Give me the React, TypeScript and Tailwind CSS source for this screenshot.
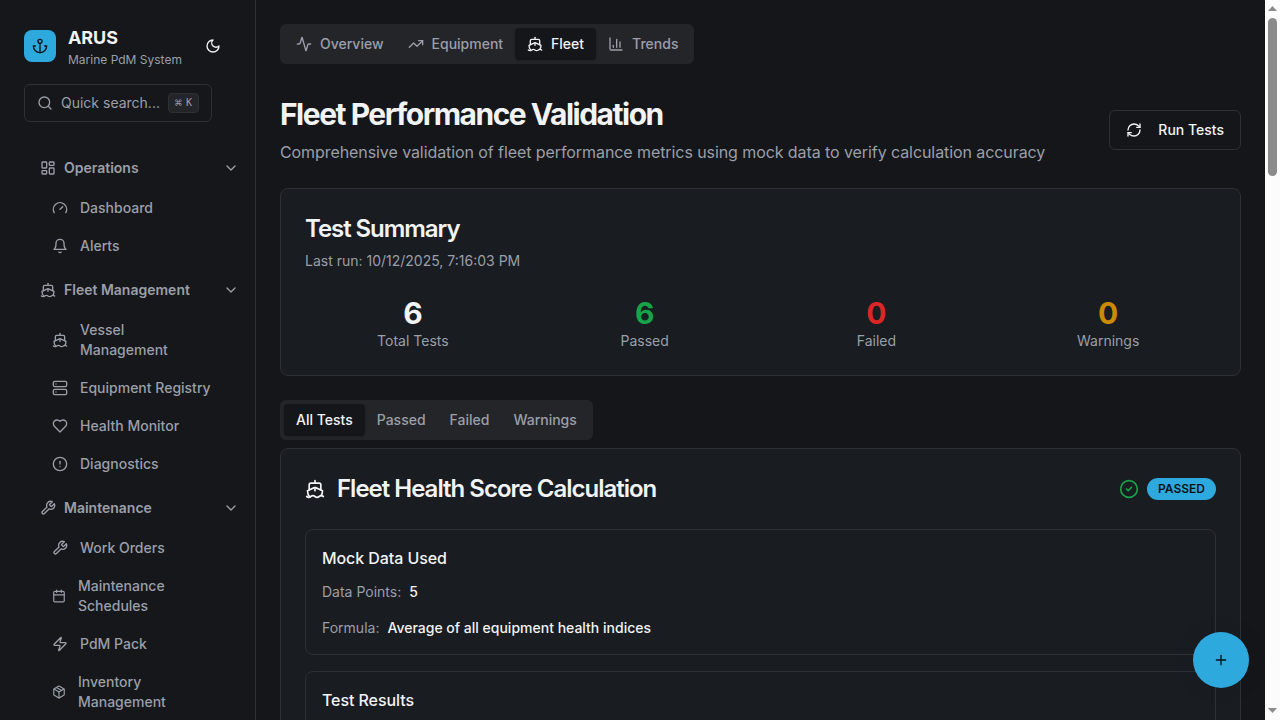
import React from 'react';
import {
  Activity, TrendingUp, Ship, ChartColumn, RefreshCw, Search, LayoutDashboard, Gauge,
  Server, CircleAlert, Calendar, Zap, ChevronDown, CircleCheck, Plus,
} from 'lucide-react';

type IconProps = { className?: string };
type IconType = React.ComponentType<IconProps>;

function Stroke({ className, children }: { className?: string; children: React.ReactNode }) {
  return (
    <svg viewBox="0 0 24 24" fill="none" stroke="currentColor" strokeWidth="2" strokeLinecap="round" strokeLinejoin="round" className={className}>
      {children}
    </svg>
  );
}

const Anchor = ({ className }: IconProps) => (
  <Stroke className={className}>
    <path d="M12 22V8" /><path d="M5 12H2a10 10 0 0 0 20 0h-3" /><circle cx="12" cy="5" r="3" />
  </Stroke>
);
const Moon = ({ className }: IconProps) => (
  <Stroke className={className}><path d="M12 3a6 6 0 0 0 9 9 9 9 0 1 1-9-9Z" /></Stroke>
);
const Bell = ({ className }: IconProps) => (
  <Stroke className={className}>
    <path d="M6 8a6 6 0 0 1 12 0c0 7 3 9 3 9H3s3-2 3-9" /><path d="M10.3 21a1.94 1.94 0 0 0 3.4 0" />
  </Stroke>
);
const Heart = ({ className }: IconProps) => (
  <Stroke className={className}>
    <path d="M19 14c1.49-1.46 3-3.21 3-5.5A5.5 5.5 0 0 0 16.5 3c-1.76 0-3 .5-4.5 2-1.5-1.5-2.74-2-4.5-2A5.5 5.5 0 0 0 2 8.5c0 2.3 1.5 4.05 3 5.5l7 7Z" />
  </Stroke>
);
const Wrench = ({ className }: IconProps) => (
  <Stroke className={className}>
    <path d="M14.7 6.3a1 1 0 0 0 0 1.4l1.6 1.6a1 1 0 0 0 1.4 0l3.77-3.77a6 6 0 0 1-7.94 7.94l-6.91 6.91a2.12 2.12 0 0 1-3-3l6.91-6.91a6 6 0 0 1 7.94-7.94l-3.76 3.76z" />
  </Stroke>
);
const Package = ({ className }: IconProps) => (
  <Stroke className={className}>
    <path d="m7.5 4.27 9 5.15" />
    <path d="M21 8a2 2 0 0 0-1-1.73l-7-4a2 2 0 0 0-2 0l-7 4A2 2 0 0 0 3 8v8a2 2 0 0 0 1 1.73l7 4a2 2 0 0 0 2 0l7-4A2 2 0 0 0 21 16Z" />
    <path d="m3.3 7 8.7 5 8.7-5" /><path d="M12 22V12" />
  </Stroke>
);

type Item = { label: string; icon: IconType; second?: string; narrow?: boolean };
const groups: { label: string; icon: IconType; items: Item[] }[] = [
  { label: 'Operations', icon: LayoutDashboard, items: [{ label: 'Dashboard', icon: Gauge }, { label: 'Alerts', icon: Bell }] },
  {
    label: 'Fleet Management', icon: Ship, items: [
      { label: 'Vessel', second: 'Management', icon: Ship },
      { label: 'Equipment Registry', icon: Server },
      { label: 'Health Monitor', icon: Heart },
      { label: 'Diagnostics', icon: CircleAlert },
    ],
  },
  {
    label: 'Maintenance', icon: Wrench, items: [
      { label: 'Work Orders', icon: Wrench },
      { label: 'Maintenance', second: 'Schedules', icon: Calendar, narrow: true },
      { label: 'PdM Pack', icon: Zap },
      { label: 'Inventory', second: 'Management', icon: Package, narrow: true },
    ],
  },
];

function Sidebar() {
  return (
    <aside className="flex w-64 shrink-0 flex-col border-r border-[#2e3035] bg-[#16171a]">
      <div className="flex items-center px-6 pt-6">
        <div className="flex size-8 items-center justify-center rounded-lg bg-[#2ea9dd] text-[#0c1118]">
          <Anchor className="size-4" />
        </div>
        <div className="ml-3 flex-1">
          <h1 className="text-lg leading-7 font-bold tracking-[-0.1px]">ARUS</h1>
          <p className="text-xs leading-4 whitespace-nowrap text-[#9a9fa9]">Marine PdM System</p>
        </div>
        <button className="mr-[10px]"><Moon className="size-4" /></button>
      </div>
      <button className="mt-4 ml-6 flex h-[38px] w-[188px] items-center rounded-md border border-[#2e3035] px-3 text-sm text-[#9a9fa9]">
        <Search className="mr-2 size-4" />
        <span>Quick search...</span>
        <kbd className="ml-auto flex h-5 items-center gap-1 rounded border border-[#2e3035] bg-[#242529] px-1.5 font-['DejaVu_Sans_Mono',monospace] text-[10px]">
          <span className="text-xs">⌘</span><span>K</span>
        </kbd>
      </button>
      <nav className="mt-7 flex flex-col gap-2 pl-10 text-sm font-medium text-[#9a9fa9]">
        {groups.map((g) => (
          <div key={g.label}>
            <div className="flex h-9 items-center pr-4 font-semibold">
              <g.icon className="mr-2 size-4" />
              <span className="flex-1">{g.label}</span>
              <ChevronDown className="size-4" />
            </div>
            <div className="mt-1 flex flex-col gap-0.5 pl-3">
              {g.items.map((i) => (
                <div key={i.label} className="flex items-center gap-3 py-2 leading-5">
                  <i.icon className={i.narrow ? 'h-4 w-[14px]' : 'size-4'} />
                  <span>{i.label}{i.second && <><br />{i.second}</>}</span>
                </div>
              ))}
            </div>
          </div>
        ))}
      </nav>
    </aside>
  );
}

const stats = [
  { value: '6', label: 'Total Tests', color: 'text-[#f1f3f5]' },
  { value: '6', label: 'Passed', color: 'text-[#16a34a]' },
  { value: '0', label: 'Failed', color: 'text-[#dc2626]' },
  { value: '0', label: 'Warnings', color: 'text-[#ca8a04]' },
];

const tabs: { label: string; icon?: IconType; active?: boolean }[] = [
  { label: 'Overview', icon: Activity },
  { label: 'Equipment', icon: TrendingUp },
  { label: 'Fleet', icon: Ship, active: true },
  { label: 'Trends', icon: ChartColumn },
];
const filters: typeof tabs = [{ label: 'All Tests', active: true }, { label: 'Passed' }, { label: 'Failed' }, { label: 'Warnings' }];

function TabList({ entries }: { entries: typeof tabs }) {
  return (
    <div className="flex h-10 w-fit items-center rounded-md bg-[#242529] p-1 text-sm font-medium text-[#9a9fa9]">
      {entries.map((t) => (
        <button key={t.label} className={`flex h-8 items-center rounded-sm px-3 ${t.active ? 'bg-[#151619] text-[#f1f3f5] shadow-sm' : ''}`}>
          {t.icon && <t.icon className="mr-2 size-4" />}
          {t.label}
        </button>
      ))}
    </div>
  );
}

function Scrollbar() {
  return (
    <div className="flex w-[15px] shrink-0 flex-col items-center bg-[#fcfcfc] text-[#8b8b8b]">
      <svg viewBox="0 0 15 18" className="h-[18px] w-[15px]"><path d="M3 11h9L7.5 6z" fill="currentColor" /></svg>
      <div className="h-[158px] w-[9px] rounded-full bg-[#8b8b8b]" />
      <svg viewBox="0 0 15 18" className="mt-auto h-[18px] w-[15px]"><path d="M3 6h9L7.5 11z" fill="currentColor" /></svg>
    </div>
  );
}

export default function App() {
  return (
    <div className="relative flex h-[720px] w-full overflow-hidden bg-[#151619] font-['Inter',sans-serif] text-[#f1f3f5]">
      <Sidebar />
      <main className="min-w-0 flex-1 p-6">
        <TabList entries={tabs} />
        <div className="mt-8 flex items-center justify-between">
          <div>
            <h1 className="text-3xl leading-9 font-bold tracking-[-1.49px]">Fleet Performance Validation</h1>
            <p className="mt-2 text-base leading-6 tracking-[-0.08px] text-[#9a9fa9]">
              Comprehensive validation of fleet performance metrics using mock data to verify calculation accuracy
            </p>
          </div>
          <button className="flex h-10 items-center gap-4 rounded-md border border-[#2e3035] px-4 text-sm font-medium">
            <RefreshCw className="size-4" />Run Tests
          </button>
        </div>
        <section className="mt-6 rounded-lg border border-[#2e3035] bg-[#191c20] p-6">
          <h2 className="text-2xl leading-8 font-semibold tracking-[-1.06px]">Test Summary</h2>
          <p className="mt-1.5 text-sm text-[#9a9fa9]">Last run: 10/12/2025, 7:16:03 PM</p>
          <div className="mt-6 grid grid-cols-4 gap-4 text-center">
            {stats.map((s) => (
              <div key={s.label}>
                <div className={`text-3xl leading-9 font-bold ${s.color}`}>{s.value}</div>
                <div className="text-sm text-[#9a9fa9]">{s.label}</div>
              </div>
            ))}
          </div>
        </section>
        <div className="mt-6"><TabList entries={filters} /></div>
        <section className="mt-2 rounded-lg border border-[#2e3035] bg-[#191c20] p-6">
          <div className="flex items-center">
            <Ship className="mr-3 size-5" />
            <h2 className="flex-1 text-2xl leading-8 font-semibold tracking-[-1px]">Fleet Health Score Calculation</h2>
            <CircleCheck className="mr-2 size-5 text-[#16a34a]" />
            <span className="rounded-full border border-transparent bg-[#2ea9dd] px-2.5 py-0.5 text-xs font-semibold text-[#0c1118]">PASSED</span>
          </div>
          <div className="mt-6 rounded-lg border border-[#2e3035] p-4 text-sm">
            <h3 className="text-base leading-6 font-medium tracking-[-0.08px]">Mock Data Used</h3>
            <p className="mt-3"><span className="mr-2 text-[#9a9fa9]">Data Points:</span><span className="font-medium">5</span></p>
            <p className="mt-4"><span className="mr-2 text-[#9a9fa9]">Formula:</span><span className="font-medium">Average of all equipment health indices</span></p>
          </div>
          <div className="mt-4 h-32 rounded-lg border border-[#2e3035] p-4">
            <h3 className="text-base leading-6 font-medium tracking-[-0.08px]">Test Results</h3>
          </div>
        </section>
      </main>
      <Scrollbar />
      <button className="absolute right-[31px] bottom-8 flex size-14 items-center justify-center rounded-full bg-[#2ea9dd] text-[#0c1118] shadow-[0_0_32px_rgba(0,0,0,0.04)]">
        <Plus className="size-4" />
      </button>
    </div>
  );
}
